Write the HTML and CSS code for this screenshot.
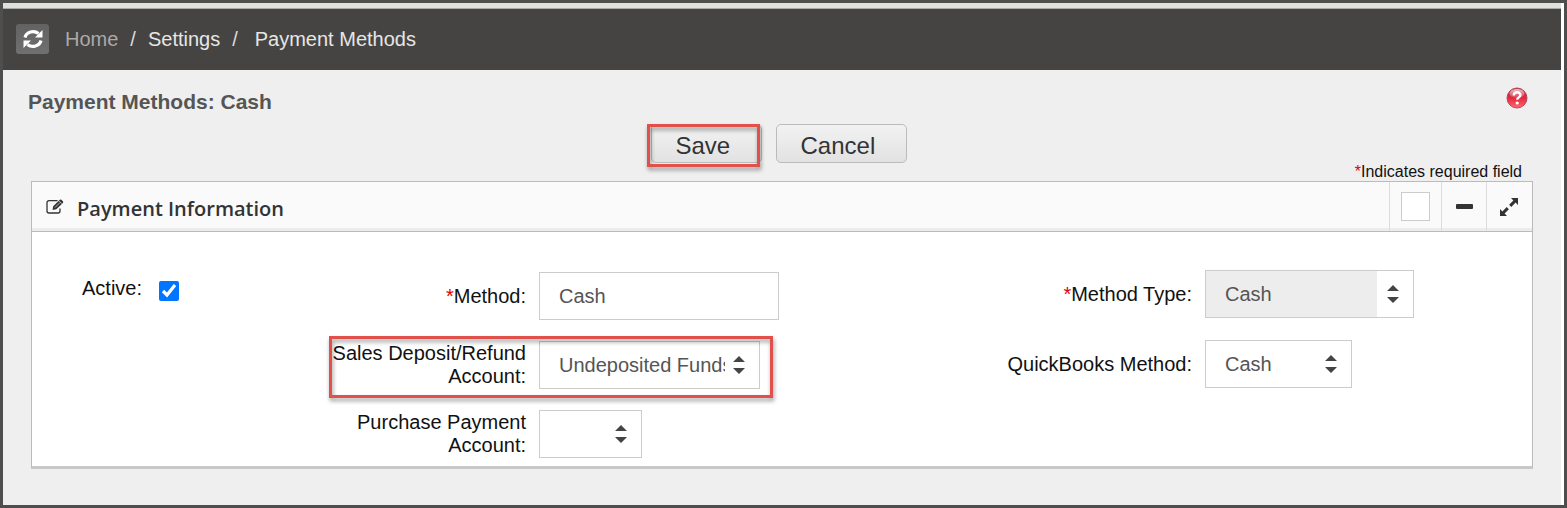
FILE: index.html
```html
<!DOCTYPE html>
<html lang="en">
<head>
  <meta charset="UTF-8">
  <meta name="viewport" content="width=device-width, initial-scale=1.0">
  <title>Payment Methods</title>
  <link rel="stylesheet" href="styles.css">
</head>
<body>
  <div class="page">
    <header class="topbar">
      <button class="refresh" type="button" aria-label="Refresh">
        <svg viewBox="0 0 20 20" width="20" height="20">
          <path d="M2 8.500A8.300 7.500 0 0 1 15.500 4.500M18 11.500A8.300 7.500 0 0 1 4.500 15.500" fill="none" stroke="#fff" stroke-width="3.200"/>
          <path d="M19.500 1v7.500H12zM.5 19v-7.500H8z" fill="#fff"/>
        </svg>
      </button>
      <nav class="breadcrumb">
        <a href="#" class="home">Home</a>
        <span>/</span>
        <a href="#">Settings</a>
        <span>/</span>
        <a href="#" class="current">Payment Methods</a>
      </nav>
    </header>

    <form class="content">
      <div class="title-row">
        <h1>Payment Methods: Cash</h1>
        <a href="#" class="help" aria-label="Help">
          <svg viewBox="0 0 22 22" width="22" height="22">
            <defs>
              <linearGradient id="ball" x1="0" y1="0" x2="0" y2="1">
                <stop offset="0" stop-color="#b8283a"/>
                <stop offset="0.500" stop-color="#e2283e"/>
                <stop offset="1" stop-color="#ff6a70"/>
              </linearGradient>
              <linearGradient id="shine" x1="0" y1="0" x2="0" y2="1">
                <stop offset="0" stop-color="#fff" stop-opacity="0.700"/>
                <stop offset="1" stop-color="#fff" stop-opacity="0.100"/>
              </linearGradient>
            </defs>
            <circle cx="11" cy="11" r="10" fill="url(#ball)" stroke="#b9475a" stroke-width="1"/>
            <ellipse cx="11" cy="6.500" rx="7.500" ry="4.500" fill="url(#shine)"/>
            <path d="M7.800 8.600c0-4.300 6.600-4.300 6.600-.6 0 2.400-3.200 2.400-3.200 4.800" fill="none" stroke="#fff" stroke-width="2.400"/>
            <circle cx="11.200" cy="16" r="1.600" fill="#fff"/>
          </svg>
        </a>
      </div>

      <div class="actions">
        <span class="marked marked-save"><button type="button" class="btn btn-save">Save</button></span>
        <button type="button" class="btn btn-cancel">Cancel</button>
      </div>

      <p class="required-note"><span class="star">*</span>Indicates required field</p>

      <section class="panel">
        <div class="panel-head">
          <svg class="edit-icon" viewBox="0 0 18 16" width="18" height="16">
            <path d="M11.500 1.600H3a2 2 0 0 0-2 2v8.400a2 2 0 0 0 2 2h9a2 2 0 0 0 2-2V9.500" fill="none" stroke="#333" stroke-width="1.300"/>
            <path d="M6.500 11l.7-3.800L13.800.8q.8-.8 1.600 0l1.500 1.500q.8.800 0 1.600L10.300 10.300z" fill="#333"/>
            <path d="M9 8.500l5-5M13 1.900l2.800 2.800" stroke="#fafafa" stroke-width=".7"/>
          </svg>
          <h2>Payment Information</h2>
          <div class="tools">
            <label class="tool tool-check"><input type="checkbox" aria-label="Select section"></label>
            <button type="button" class="tool" aria-label="Collapse">
              <svg viewBox="0 0 17 5" width="17" height="5"><rect width="17" height="5" rx="1" fill="#333"/></svg>
            </button>
            <button type="button" class="tool" aria-label="Expand">
              <svg viewBox="0 0 18 18" width="18" height="18">
                <path d="M11 0h7v7l-2.400-2.400-4.300 4.300-2.200-2.200 4.300-4.300zM7 18H0v-7l2.400 2.400 4.300-4.300 2.200 2.200-4.300 4.300z" fill="#333"/>
              </svg>
            </button>
          </div>
        </div>

        <div class="panel-body">
          <div class="column active-column">
            <label for="active">Active:</label>
            <input type="checkbox" id="active" checked>
          </div>

          <div class="column account-column">
            <div class="field">
              <label for="method"><span class="star">*</span>Method:</label>
              <input type="text" id="method" value="Cash">
            </div>
            <div class="field marked marked-field">
              <label for="deposit">Sales Deposit/Refund Account:</label>
              <span class="select select-deposit">
                <select id="deposit"><option>Undeposited Funds</option></select>
                <svg viewBox="0 0 12 18" width="12" height="18"><path d="M0 6l6-6 6 6zM0 12h12l-6 6z"/></svg>
              </span>
            </div>
            <div class="field">
              <label for="purchase">Purchase Payment Account:</label>
              <span class="select select-purchase">
                <select id="purchase"><option></option></select>
                <svg viewBox="0 0 12 18" width="12" height="18"><path d="M0 6l6-6 6 6zM0 12h12l-6 6z"/></svg>
              </span>
            </div>
          </div>

          <div class="column">
            <div class="field">
              <label for="type"><span class="star">*</span>Method Type:</label>
              <span class="select select-type">
                <select id="type" disabled><option>Cash</option></select>
                <svg viewBox="0 0 12 18" width="12" height="18"><path d="M0 6l6-6 6 6zM0 12h12l-6 6z"/></svg>
              </span>
            </div>
            <div class="field">
              <label for="quickbooks">QuickBooks Method:</label>
              <span class="select select-quickbooks">
                <select id="quickbooks"><option>Cash</option></select>
                <svg viewBox="0 0 12 18" width="12" height="18"><path d="M0 6l6-6 6 6zM0 12h12l-6 6z"/></svg>
              </span>
            </div>
          </div>
        </div>
      </section>
    </form>
  </div>
</body>
</html>
```

FILE: styles.css
```css
* {
  box-sizing: border-box;
}

body {
  margin: 0;
  font-family: "Liberation Sans", Arial, sans-serif;
  font-size: 20px;
  line-height: 23px;
  color: #111;
  background: #fff;
}

.page {
  min-height: 100vh;
  border: 3px solid #4f4e4f;
  background: linear-gradient(to left, #fff 3px, #efefef 3px);
}

.topbar {
  display: flex;
  align-items: center;
  gap: 16px;
  height: 67px;
  margin-right: 3px;
  padding: 0 13px;
  border-top: 5px solid #e0e0de;
  background: #454442;
  box-shadow: inset 0 1px 0 #aaa;
}

.refresh {
  display: flex;
  align-items: center;
  justify-content: center;
  width: 33px;
  height: 30px;
  padding: 0;
  border: 0;
  border-radius: 3px;
  background: linear-gradient(#626262, #707070);
}

.breadcrumb {
  display: flex;
  gap: 12px;
  color: #ddd;
}

.breadcrumb a {
  color: #e6e6e6;
  text-decoration: none;
}

.breadcrumb .home {
  color: #aaa;
}

.breadcrumb .current {
  padding-left: 5px;
}

.content {
  padding: 15px 31px 16px 28px;
}

.title-row {
  display: flex;
  justify-content: space-between;
  align-items: center;
  height: 32px;
  margin-left: -3px;
}

.title-row h1 {
  margin: 0;
  font-size: 21px;
  color: #555;
}

.help {
  display: flex;
  margin: 0 5px 6px 0;
}

.actions {
  display: flex;
  justify-content: center;
  gap: 14px;
  margin-top: 7px;
  padding-right: 7px;
}

.btn {
  height: 39px;
  padding: 4px 24px 0;
  border: 1px solid #bbb;
  border-radius: 5px;
  font-family: inherit;
  font-size: 24px;
  line-height: 33px;
  color: #333;
  background: linear-gradient(#f2f2f2, #e2e2e2);
}

.btn-save {
  width: 111px;
  text-align: left;
}

.btn-cancel {
  width: 131px;
  text-align: left;
}

/* red call-out boxes */
.marked {
  position: relative;
}

.marked::after {
  content: "";
  position: absolute;
  border: 3px solid #e2504c;
  filter: drop-shadow(1px 3px 2px rgba(0, 0, 0, 0.4));
  pointer-events: none;
}

.marked-save::after {
  inset: 0 2px -4px -4px;
}

.marked-field::after {
  inset: -5px -13px -9px 7px;
}

.required-note {
  margin: 0;
  padding-right: 11px;
  font-size: 16px;
  line-height: 18px;
  text-align: right;
}

.star {
  color: #d00;
}

.panel {
  border: 1px solid #bbb;
  border-bottom: 3px solid #c8c8c8;
  background: #fff;
}

.panel-head {
  display: flex;
  align-items: center;
  height: 50px;
  padding: 0 1px 0 14px;
  border-bottom: 1px solid #bbb;
  background: #fafafa;
  box-shadow: inset 0 -3px 0 #ececec;
}

.panel-head h2 {
  margin: 0;
  padding: 4px 0 0 13px;
  font-family: "Open Sans", sans-serif;
  font-size: 20px;
  font-weight: 600;
  color: #333;
}

.tools {
  display: flex;
  align-self: stretch;
  margin-left: auto;
}

.tool {
  display: flex;
  align-items: center;
  justify-content: center;
  width: 45px;
  padding: 0;
  border: 0;
  border-left: 1px solid #ddd;
  background: none;
}

.tool-check {
  width: 52px;
}

.tool-check input {
  appearance: none;
  width: 29px;
  height: 29px;
  margin: 0;
  border: 1px solid #ccc;
  background: #fff;
}

.panel-body {
  display: grid;
  grid-template-columns: 145fr 333fr 272fr;
  padding: 38px 0 8px;
}

.column {
  display: flex;
  flex-direction: column;
  align-items: flex-start;
  gap: 22px;
}

.active-column {
  flex-direction: row;
  gap: 17px;
  padding: 7px 0 0 50px;
}

.active-column input {
  width: 20px;
  height: 20px;
  margin: 4px 0 0;
}

.account-column {
  gap: 21px;
  padding-top: 2px;
}

.field {
  display: flex;
  align-items: center;
  gap: 13px;
  height: 48px;
}

.field label {
  width: 204px;
  text-align: right;
}

.field input,
.select select {
  height: 48px;
  padding: 0 19px;
  border: 1px solid #ccc;
  border-radius: 0;
  font-family: inherit;
  font-size: 20px;
  color: #555;
  background: #fff;
}

.field input {
  width: 240px;
}

.select {
  display: block;
  position: relative;
}

.select select {
  appearance: none;
  display: block;
  width: 100%;
  padding-right: 34px;
}

.select select:disabled {
  opacity: 1;
  background: linear-gradient(to left, #fff 36px, #ededed 36px);
}

.select svg {
  position: absolute;
  top: 15px;
  right: 15px;
  fill: #444;
  pointer-events: none;
}

.select-deposit {
  width: 221px;
}

.select-purchase {
  width: 103px;
}

.select-type {
  width: 209px;
}

.select-quickbooks {
  width: 147px;
}
```
